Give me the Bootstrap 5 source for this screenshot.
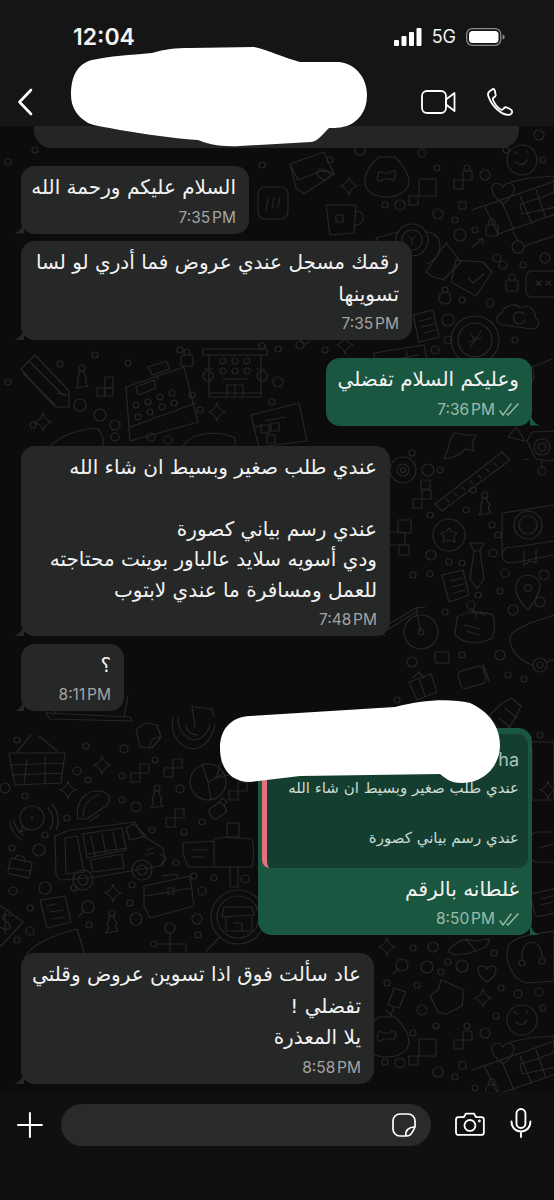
<!DOCTYPE html>
<html lang="en">
<head>
    <meta charset="UTF-8">
    <meta name="viewport" content="width=device-width, initial-scale=1.0">
    <title>Chat</title>
    <link href="https://cdn.jsdelivr.net/npm/bootstrap@5.3.0/dist/css/bootstrap.min.css" rel="stylesheet">
    <style>
        body {
            background-color: #0c0c0c;
            color: #f2f2f2;
            font-family: "DejaVu Sans", "Noto Sans", sans-serif;
            overflow: hidden;
        }

        .phone-shell { width: 554px; height: 1200px; position: relative; overflow: hidden; }

        /* top bar */
        .top-bar { height: 126px; background-color: #151515; position: relative; z-index: 2; }
        .status-row { height: 26px; padding: 24px 49px 0 73px; box-sizing: content-box; }
        .clock { font-family: Inter, sans-serif; font-weight: 600; font-size: 23px; line-height: 26px; }
        .net-label { font-family: Inter, sans-serif; font-size: 18px; line-height: 26px; margin: 0 10px; }
        .nav-row { height: 40px; margin-top: 32px; padding: 0 41px 0 17px; }
        .video-gap { margin-right: 31px; }

        /* chat area */
        .chat-area { height: 966px; position: relative; overflow: hidden; }
        .doodles { position: absolute; left: 0; top: 0; }
        .doodles * { fill: none; stroke: #272727; stroke-width: 1.2; stroke-linecap: round; stroke-linejoin: round; }
        .chat-flow { position: relative; }
        .notice-strip { height: 22px; margin: 0 35px 18px 34px; background-color: #242525; border-radius: 0 0 18px 18px; }

        .bubble {
            position: relative;
            padding: 6px 13px;
            border-radius: 14px;
            background-color: #262727;
            font-size: 20px;
            line-height: 31.5px;
        }
        .bubble::after {
            content: "";
            position: absolute;
            bottom: 0;
            left: -7px;
            width: 10px;
            height: 14px;
            background-color: inherit;
            clip-path: path('M10 0 C9 7 6 12 0 14 L10 14 Z');
        }
        .bubble-out { background-color: #1a5740; margin-left: auto; margin-right: 22px; }
        .bubble-out::after { left: auto; right: -8px; clip-path: path('M0 0 C1 7 4 12 10 14 L0 14 Z'); }
        .bubble-in { margin-left: 21px; }

        .msg-text { direction: rtl; text-align: right; white-space: nowrap; }
        .tight-lines { line-height: 30.8px; }
        .msg-time {
            font-family: Inter, sans-serif;
            font-size: 15.5px;
            word-spacing: -2.5px;
            line-height: 20px;
            margin-top: 4px;
            color: #a3a3a3;
        }
        .bubble-out .msg-time { color: #9cbcac; }

        .w-one { width: 228px; margin-bottom: 7.5px; }
        .w-two { width: 391px; margin-bottom: 18px; }
        .w-three { width: 206px; margin-bottom: 20.5px; }
        .w-four { width: 369px; margin-bottom: 8px; }
        .w-five { width: 103px; margin-bottom: 16.5px; }
        .w-six { width: 274px; margin-bottom: 18px; }
        .w-seven { width: 353px; }

        .reply-box {
            margin: 0 -9px 6px -9px;
            padding: 10px 9px 17px 0;
            background-color: #143f30;
            border-left: 5px solid #e8707c;
            border-radius: 8px 10px 10px 8px;
            color: #ccdad3;
            font-size: 15px;
            line-height: 25px;
        }
        .reply-name { font-family: Inter, sans-serif; font-size: 18px; line-height: 32px; color: #a9c2b6; text-align: right; }

        /* composer */
        .composer { height: 108px; background-color: #101010; padding: 12px 22px 0 17px; position: relative; z-index: 2; }
        .composer-field { width: 372px; height: 42px; margin: 0 24px 0 18px; padding-right: 15px; border-radius: 21px; background-color: #2a2a2a; }
        .composer-gap { margin-right: 25px; }

        .scribble { position: absolute; left: 0; top: 0; z-index: 3; pointer-events: none; }
    </style>
</head>
<body>
<div class="phone-shell">
    <div class="top-bar">
        <div class="status-row d-flex align-items-center justify-content-between">
            <span class="clock">12:04</span>
            <div class="d-flex align-items-center">
                <svg width="28" height="18" viewBox="0 0 28 18" fill="#fff">
                    <rect x="0" y="12" width="5" height="6" rx="1"/>
                    <rect x="7.500" y="8" width="5" height="10" rx="1"/>
                    <rect x="15" y="4" width="5" height="14" rx="1"/>
                    <rect x="22.500" y="0" width="5" height="18" rx="1"/>
                </svg>
                <span class="net-label">5G</span>
                <svg width="39" height="18" viewBox="0 0 39 18">
                    <rect x="0.700" y="0.700" width="34" height="16.600" rx="5.500" fill="none" stroke="#8a8a8a" stroke-width="1.300"/>
                    <rect x="3" y="3" width="29.500" height="12" rx="3.500" fill="#fff"/>
                    <path d="M36.500 6.500c1.500.4 2.200 1.300 2.200 2.500s-.7 2.100-2.200 2.500z" fill="#8a8a8a"/>
                </svg>
            </div>
        </div>
        <div class="nav-row d-flex align-items-center justify-content-between">
            <svg width="16" height="28" viewBox="0 0 16 28" fill="none" stroke="#fff" stroke-width="2.600" stroke-linecap="round" stroke-linejoin="round">
                <path d="M14 2 2.500 14 14 26"/>
            </svg>
            <div class="d-flex align-items-center">
                <svg class="video-gap" width="35" height="24" viewBox="0 0 35 24" fill="none" stroke="#fff" stroke-width="1.800" stroke-linejoin="round">
                    <rect x="1" y="1" width="24" height="22" rx="5"/>
                    <path d="M25 9.500 33.500 3v18L25 14.500z"/>
                </svg>
                <svg width="26" height="28" viewBox="0 0 26 28" fill="none" stroke="#fff" stroke-width="1.800" stroke-linejoin="round">
                    <path d="M5.500 1.200 2.300 3.500C.8 4.700.8 6.700 1.500 8.600 3.300 13.500 6.200 18 10.200 21.500c3.300 2.900 7.700 5.500 11.300 5.400 2.100-.1 3.800-1.500 3.600-3.400-.1-1-.8-1.700-1.700-2.200l-3.500-1.800c-1-.5-2-.3-2.800.5l-1.400 1.400c-.6.500-1.300.5-2 .1-3.500-2.300-6.300-5.800-7.800-9.700-.3-.8-.1-1.500.5-2l1.400-1.100c.9-.7 1.100-1.700.7-2.700L7.700 2.300c-.4-1-1.400-1.700-2.200-1.100z"/>
                </svg>
            </div>
        </div>
    </div>

    <div class="chat-area">
        <svg class="doodles" width="554" height="966" viewBox="0 126 554 966">
            <defs>
                <g id="spark"><path d="M0-9C1-4 3-2 8 0 3 2 1 4 0 9-1 4-3 2-8 0-3-2-1-4 0-9z"/></g>
                <g id="lock"><rect x="-6" y="-3" width="12" height="11" rx="2"/><path d="M-3-3v-3a3 3 0 0 1 6 0v3"/></g>
                <g id="blocks"><rect x="-9" y="0" width="9" height="9"/><rect x="0" y="-9" width="9" height="9"/></g>
                <g id="core"><circle cx="0" cy="-10" r="3"/><path d="M-3-7 2-7C1-3 4-2 5 0 3 2 3 5 6 8L-6 10C-3 6-3 3-5 1-4-1-2-3-3-7z"/></g>
            </defs>

            <!-- this part of the wallpaper comes back 860px further down -->
            <g id="tile-top">
                <g transform="translate(387 177)"><path d="M-8-20C-16-14-23-4-22 6-21 16-10 20 0 20 11 20 21 15 22 5 22-6 13-15 8-20z"/><path d="M-9-4a3 3 0 0 1 5 0H3a3 3 0 1 1 5 3 3 3 0 0 1-5 3H-4a3 3 0 1 1-5-3z"/></g>
                <g transform="translate(432 192)"><rect x="-13" y="-13" width="17" height="17"/><rect x="-23" y="4" width="9" height="9"/></g>
                <use href="#blocks" x="463" y="180"/>
                <rect x="459" y="202" width="7" height="7"/>
                <g transform="translate(503 190)"><path d="M0 14C-8 8-12 3-11-3-9-8-3-8 0-3 3-8 9-8 11-3 12 3 8 8 0 14z"/></g>
                <circle cx="522" cy="160" r="15"/><path d="M516 162c4 4 9 3 11-2M514 152l3 2M526 150l2 3"/>
                <g transform="translate(500 192)"><path d="M10-10 30-14 54-16V0L40 6 20 12 22 22 60 14"/><path d="M-28 18 58-12"/><path d="M-15 15-2 42 56 22M2 10l12 28M20 4l12 28M36-2l10 28"/><circle cx="18" cy="55" r="6"/><path d="M13 40 18 49M24 54 54 44"/></g>
                <use href="#lock" x="492" y="228"/>
            </g>
            <use href="#tile-top" y="860"/>

            <use href="#lock" x="512" y="283"/>
            <g transform="translate(412 240)"><circle r="16"/><circle r="10"/><path d="M-3-4 0 0 3-4M0 0V5"/><path d="M14-8C22-8 28-2 28 6 28 14 22 22 14 24M-14-8-36-2-32 4-16 4"/></g>
            <path d="M426 272 446 243 461 262 443 280 431 276zM472 247l10-8m-4 0h5v5"/>
            <g transform="translate(473 270)"><path d="M-17-10 10-8 19 2 3 26-22 12zM-5 8 0 13 11 4"/></g>
            <g transform="translate(520 317)"><path d="M-16 8C-24 8-26-2-18-4-16-13-4-14 0-9 8-13 16-8 15 0 22 4 18 12 12 12z"/><path d="M4-3A6 6 0 1 0 5 3"/></g>
            <g transform="translate(475 340)"><circle r="24"/><circle r="17"/><path d="M-5-7 0 0 6-9M0 0-5 8M-6 2 6-2"/></g>
            <g transform="translate(543 283)"><rect x="-17" y="-12" width="32" height="26" rx="6"/><path d="M-7 2l5-1M-7-2l5 4M-2-2l-5 4M3-2l5 4M8-2l-5 4"/></g>
            <g transform="translate(425 325)"><path d="M-12-10 8-15 14 12-6 17z"/><path d="M-5-4 7-7M-3 2 9-1M-1 8 10 5"/></g>

            <!-- next to the first bubble -->
            <g transform="translate(310 172)"><path d="M-20-8 14-20 24 2-6 22-14 16zM-20-8-12 8 14-2 24 2"/><path d="M8 4C4-2 14-6 14 0 20-4 24 4 14 8z"/></g>
            <g transform="translate(342 215)"><path d="M-16-10 14-10 12 18-12 20zM14-4C24-4 24 10 13 10"/><rect x="-6" y="0" width="7" height="7"/></g>
            <g transform="translate(272 205)"><rect x="-14" y="-18" width="30" height="32" rx="7"/><path d="M-4-6-6 6M2-8 0 4M8-8 6 2"/></g>
            <use href="#spark" x="349" y="186"/>

            <use href="#spark" x="345" y="345"/>
            <g transform="translate(520 375)"><circle r="14"/><path d="M-12-8-28-14M12-8 32-16"/></g>
            <g transform="translate(400 375)"><path d="M-26-22 24-30 32 10-22 24z"/><path d="M-14-14 18-20M6-25 12 16"/></g>

            <!-- middle right, below the green bubble -->
            <g transform="translate(458 447)"><path d="M-4-14 8-12 18-12 14-4 16 4 8 2 0 8-5 10-14 12-10 2-8-6z"/></g>
            <g transform="translate(472 478)"><path d="M-37 26-30 33 38-18 30-26z"/><path d="M-26 21l3 3M-18 15l3 3M-10 9l3 3M-2 3l3 3M6-3l3 3M14-9l3 3M22-15l3 3"/></g>
            <g transform="translate(542 447)"><circle r="8"/><circle r="4"/><path d="M-15-6-10-15 12-16 22-8V8L8 14-6 12zM-14 12l-5 1M0 14v6"/><circle cx="0" cy="24" r="4"/></g>
            <path d="M508 437l8-10 9 14z"/>
            <use href="#core" x="485" y="505"/>
            <g transform="translate(530 535)"><path d="M-28-22V20C-28 26-24 28-18 28L24 20M-28-22 24-30M-28 20C-26 12-22 12-16 12L24 6M-6 16V30L0 26 6 28V14"/><circle cx="-2" cy="-10" r="14"/><circle cx="-2" cy="-10" r="9"/></g>
            <g transform="translate(449 535)"><circle r="16"/><path d="M0-7 3-3 8-2 5 2 6 7 0 5-6 7-5 2-8-2-3-3z"/></g>
            <g transform="translate(477 565)"><path d="M-7-22H7L3-14H-3zM-3-14-7 14 0 24 7 14 3-14"/></g>
            <g transform="translate(455 585)"><path d="M-13-10 8-15 14 10-6 17z"/><path d="M-5-4 7-7M-3 2 9-1M-1 8 10 5"/></g>
            <g transform="translate(528 590)"><path d="M0 20C-8 12-13 4-12-4-11-11-6-15 0-15 8-14 13-8 12-2 10 6 5 14 0 20z"/><circle cx="0" cy="-2" r="3.500"/></g>
            <g transform="translate(421 632)"><circle r="17"/><circle r="3"/><path d="M0 0-5-24 4-25M-5-24-32-8-38-14M-5-20-34-2"/><path d="M-38-14-44-3-36 4"/></g>
            <g transform="translate(477 627)"><path d="M-20-10C-10-16 6-16 16-12 18-4 18 6 14 12-2 18-14 16-22 8z"/><path d="M-12-2 2 2M-10 4 2 8"/><circle cx="-6" cy="-22" r="4"/><path d="M-4-18 0-10M-8-17 8-12"/></g>
            <g transform="translate(540 665)"><circle r="7"/><circle r="3"/><path d="M-7 0C-20-4-30-14-30-26-30-34-20-36-10-42L14-50M7-3 14-6"/></g>
            <rect x="435" y="652" width="14" height="11" rx="2"/>
            <g transform="translate(473 677)"><rect x="-14" y="-9" width="26" height="18" rx="4" transform="rotate(-16)"/><path d="M10-13 16 4"/></g>
            <g transform="translate(423 688)"><path d="M-14-6 8-14 14 4-6 12zM-4-10 2 8M-10-10l6-6 5 6"/></g>
            <g transform="translate(503 712)"><path d="M-14 4-2-8 8-14 18-6 10 10 0 22zM-4 6 8 16M2-4 14 6"/></g>
            <g transform="translate(403 470)"><circle r="13"/><circle r="6"/><circle r="2.500"/></g>
            <g transform="translate(422 490)"><rect x="-1" y="-10" width="9" height="9"/><use href="#blocks" x="0" y="9"/></g>
            <g transform="translate(405 533)"><rect x="-7" y="-13" width="13" height="13"/><rect x="-17" y="-1" width="17" height="13"/><rect x="-6" y="12" width="10" height="10"/></g>
            <g transform="translate(540 760)"><path d="M-12-18H14V40H-12zM-12-18-8-12V40"/></g>
            <g transform="translate(545 850)"><rect x="-14" y="-18" width="34" height="30" rx="6"/><path d="M-6-2 8-6"/></g>
            <use href="#spark" x="548" y="790"/>
            <g transform="translate(545 905)"><rect x="-12" y="-14" width="30" height="24" rx="4" transform="rotate(-12)"/><path d="M-4 0 8-3M-4-6 8-9"/></g>

            <!-- lower right, under the reply bubble -->
            <use href="#spark" x="387" y="947"/>
            <use href="#spark" x="483" y="998"/>
            <g transform="translate(402 965)"><circle r="6"/><path d="M-4 4-9 9"/></g>
            <g transform="translate(487 972)"><path d="M0 10C-6 6-10 2-9-3-7-7-2-7 0-3 2-7 7-7 9-3 10 2 6 6 0 10z"/></g>
            <g transform="translate(448 998)"><path d="M-7-18 16-8 14 8-2 16-10 14-18 -2-10-8z"/></g>
            <g transform="translate(398 1000)"><path d="M-4-12 8-8 1 8-10 5zM-12 10l6 6M-4 8l-4 8"/></g>
            <g transform="translate(470 943)"><path d="M-22 8C-14-2-6-6 4-2L20-4 16 4 0 10-16 12zM-4-4 6 8"/></g>
            <g transform="translate(530 957)"><path d="M-20-14C-10-22 10-24 24-26V24L-4 26C-20 22-28-4-20-14z"/><path d="M-8 2C-10-20 12-20 12 0"/><circle cx="-8" cy="6" r="3"/><circle cx="12" cy="4" r="3"/></g>

            <!-- left column, next to the reply bubble -->
            <g transform="translate(37 767)"><path d="M-28-14H28L24 16-22 18zM-10-8-13 18M8-10 8 16M-27-2 27-4M-25 8 25 6M-20-15-6-32M20-16 2-31"/></g>
            <use href="#spark" x="102" y="765"/>
            <use href="#spark" x="68" y="790"/>
            <g transform="translate(95 803)"><path d="M-17 16C-20 2-12-12 2-12 14-12 17-4 12 2L-8 16z"/><path d="M-12 14C-12 2-6-6 4-8M-5 18 4 12"/></g>
            <g transform="translate(148 735)"><path d="M-12-6-2-12 9-10 13 2 4 13-8 12z"/><path d="M2 12C2 4 6 2 13 2"/></g>
            <g transform="translate(190 733)"><path d="M-17-15C-20-2-14 10-2 15 8 18 20 12 25-8M-12-16C-12-4-8 2 0 6 8 9 16 4 20-8M-4-8C-4-2 2 2 8 2"/><path d="M2-28 5-6M5-26 22-24 24-16"/></g>
            <g transform="translate(208 782)"><circle r="18"/><path d="M0 0 16-9M0 0-6-17M0 0 3 18"/><path d="M8-4 14-22 26-8z"/></g>
            <use href="#blocks" x="173" y="768"/>
            <use href="#blocks" x="140" y="773"/>
            <use href="#blocks" x="175" y="818"/>
            <use href="#blocks" x="238" y="791"/>
            <use href="#core" x="157" y="798"/>
            <g transform="translate(217 810)"><rect x="-8" y="-5" width="16" height="12" rx="3" transform="rotate(-35)"/><path d="M2-7 5-12 10-8 7-4"/></g>
            <g transform="translate(32 818)"><circle r="12"/><circle r="1"/><path d="M-9 8-12 14-4 11M16-10C22-4 22 6 18 12M-18 2C-18 8-12 16-8 18M20-14C26-8 28 4 24 12M-22 4C-22 12-14 20-10 22"/></g>
            <g transform="translate(110 850)"><path d="M-55-14-40-20 25-28 33-14 53-2 55 8 50 16-20 28-50 30-54 24z"/><path d="M-45-12-33-14-26 22-44 24z"/><path d="M-27-16 12-22 16 0-23 8zM-19-14-15 6M-8-16-4 4M3-18 7 2M-22 4 17-2"/><path d="M-20 10-17 22 14 18 12 4z"/><path d="M16-22 24-26 36-14 20-10z"/><path d="M50 4 56 8 52 16M36 0 44-2M36 5 44 3"/><circle cx="-27" cy="30" r="10"/><circle cx="-27" cy="30" r="5"/><circle cx="32" cy="20" r="10"/><circle cx="32" cy="20" r="5"/></g>
            <g transform="translate(20 868)"><rect x="-11" y="-8" width="22" height="16" rx="2" transform="rotate(12)"/><path d="M-5-9-3-13 4-11 5-6M-11 0 10 3"/></g>
            <g transform="translate(218 853)"><path d="M-35-10-4-12-4 14-30 14-35 0zM-4-14C4-16 10-16 34-14 36-4 36 6 34 14H-4M-26-3-10-3M-26 4-14 4"/><rect x="9" y="-30" width="12" height="14"/><path d="M12 14V34H20V14"/></g>
            <g transform="translate(168 898)"><path d="M-24-12 22-22 26 8-18 20-24 8zM-23-2 24-10M-6-22 8-24 10-20"/><rect x="0" y="-10" width="6" height="6"/></g>
            <g transform="translate(238 917)"><circle r="27"/><circle r="21"/><path d="M-18 20-32 34"/><path d="M-14-10H14L16-2-16 0zM-12 0V14H14V0M-4 6H4V14H-4"/></g>
            <g transform="translate(55 910)"><path d="M-15-10 10-14 16 12-8 18zM-8-4 0-6M-5 2 8 0M-3 9 10 7"/></g>
            <use href="#spark" x="113" y="893"/>
            <use href="#core" x="112" y="923"/>
            <g transform="translate(5 922)"><path d="M-10-20 18 0-4 24-24 10"/><path d="M6-6C0-10-4-6-2-3 1 0 6 1 5 5 3 9-2 8-5 5M0-11V12"/></g>
            <g transform="translate(150 940)"><circle cx="20" cy="-12" r="5"/><path d="M20-7V4H6M20 4V12M20 4H36V12"/><circle cx="4" cy="4" r="3"/></g>
            <g transform="translate(55 945)"><path d="M-30 12C-24 0-2-10 22-16L30 10"/></g>
            <circle cx="88" cy="907" r="6"/><path d="M84 911l-5 5"/>
            <g transform="translate(100 715)"><path d="M-54-2-50 4 32 6 30 2zM-45-2-40-20M24 2 28-20"/></g>

            <!-- strip between bubbles on the left -->
            <g transform="translate(43 377)"><path d="M-22-8-8-22 26 14 26 30 12 30z"/><path d="M-14-16 20 18M-20-4 12 28M14 16 24 18"/></g>
            <use href="#core" x="82" y="378"/>
            <g transform="translate(105 388)"><rect x="0" y="-11" width="8" height="11"/><rect x="-8" y="0" width="8" height="8"/><rect x="0" y="0" width="8" height="8"/></g>
            <g transform="translate(158 397)"><path d="M-32-10 26-30 40 25-28 44z"/><path d="M-28 30 38 6M-22-10-4-17-2-9-20-2z"/><circle cx="-22" cy="8" r="3"/><circle cx="-10" cy="5" r="3"/><circle cx="2" cy="0" r="3"/><circle cx="14" cy="-4" r="3"/><circle cx="-20" cy="20" r="3"/><circle cx="-8" cy="15" r="3"/><circle cx="4" cy="10" r="3"/><circle cx="16" cy="6" r="3"/><path d="M-10-30 8-36 12-28-6-22zM-2-22 0-18"/></g>
            <g transform="translate(235 367)"><path d="M-32-18H32V-12H-32zM-26-12V30H26V-12M-26 26H26M-8 30V18H8V30M0 18V30M-30 2H-22M22 2H30"/><circle cx="-27" cy="9" r="5"/><circle cx="27" cy="9" r="5"/><circle cx="-12" cy="-6" r="3"/><circle cx="0" cy="-6" r="3"/><circle cx="12" cy="-6" r="3"/><circle cx="-12" cy="4" r="3"/><circle cx="0" cy="4" r="3"/><circle cx="12" cy="4" r="3"/><path d="M-12 12H12"/></g>
            <use href="#lock" x="187" y="358"/>
            <use href="#spark" x="217" y="412"/>
            <use href="#spark" x="43" y="422"/>
            <g transform="translate(277 427)"><path d="M-26-12 22-24 30 14-18 20zM-22 0-14-2M-12-6 8-10"/><rect x="-16" y="-2" width="8" height="8"/><rect x="-6" y="-4" width="8" height="8"/><rect x="-10" y="8" width="8" height="8"/></g>
            <g transform="translate(80 435)"><path d="M-30 12C-20-2 10-8 18-6 24 0 24 8 22 14"/></g>
            <g transform="translate(225 438)"><path d="M-42 8C-34-6-6-8 10 0V10"/></g>

            <!-- small rings, scattered all over -->
            <g id="ring-layer"></g>
        </svg>

        <div class="chat-flow">
            <div class="notice-strip"></div>

            <div class="bubble bubble-in w-one">
                <div class="msg-text">السلام عليكم ورحمة الله</div>
                <div class="msg-time text-end">7:35 PM</div>
            </div>

            <div class="bubble bubble-in w-two">
                <div class="msg-text">رقمك مسجل عندي عروض فما أدري لو لسا<br>تسوينها</div>
                <div class="msg-time text-end">7:35 PM</div>
            </div>

            <div class="bubble bubble-out w-three">
                <div class="msg-text">وعليكم السلام تفضلي</div>
                <div class="msg-time d-flex justify-content-end align-items-center gap-1">
                    <span>7:36 PM</span>
                    <svg width="20" height="13" viewBox="0 0 20 13" fill="none" stroke="#9cbcac" stroke-width="1.400" stroke-linecap="round"><path d="M1 8l3 4L12 1M8 11l1 1L19 1"/></svg>
                </div>
            </div>

            <div class="bubble bubble-in w-four">
                <div class="msg-text tight-lines">عندي طلب صغير وبسيط ان شاء الله<br><br>عندي رسم بياني كصورة<br>ودي أسويه سلايد عالباور بوينت محتاجته<br>للعمل ومسافرة ما عندي لابتوب</div>
                <div class="msg-time text-end">7:48 PM</div>
            </div>

            <div class="bubble bubble-in w-five">
                <div class="msg-text">؟</div>
                <div class="msg-time text-end">8:11 PM</div>
            </div>

            <div class="bubble bubble-out w-six">
                <div class="reply-box">
                    <div class="reply-name">ha</div>
                    <div class="msg-text">عندي طلب صغير وبسيط ان شاء الله<br><br>عندي رسم بياني كصورة</div>
                </div>
                <div class="msg-text">غلطانه بالرقم</div>
                <div class="msg-time d-flex justify-content-end align-items-center gap-1">
                    <span>8:50 PM</span>
                    <svg width="20" height="13" viewBox="0 0 20 13" fill="none" stroke="#9cbcac" stroke-width="1.400" stroke-linecap="round"><path d="M1 8l3 4L12 1M8 11l1 1L19 1"/></svg>
                </div>
            </div>

            <div class="bubble bubble-in w-seven">
                <div class="msg-text">عاد سألت فوق اذا تسوين عروض وقلتي<br>تفضلي !<br>يلا المعذرة</div>
                <div class="msg-time text-end">8:58 PM</div>
            </div>
        </div>
    </div>

    <div class="composer d-flex align-items-start">
        <svg class="mt-2" width="26" height="26" viewBox="0 0 26 26" fill="none" stroke="#fff" stroke-width="2" stroke-linecap="round">
            <path d="M13 1V25M1 13H25"/>
        </svg>
        <div class="composer-field d-flex align-items-center justify-content-end">
            <svg width="24" height="24" viewBox="0 0 24 24" fill="none" stroke="#fff" stroke-width="1.700" stroke-linejoin="round">
                <path d="M14 23H8C4 23 1 20 1 16V8C1 4 4 1 8 1H16C20 1 23 4 23 8V14C19 23 17 23 14 23Z"/>
                <path d="M14 23C13 18 16 14 23 14"/>
            </svg>
        </div>
        <svg class="mt-2 composer-gap" width="30" height="24" viewBox="0 0 30 24" fill="none" stroke="#fff" stroke-width="1.800" stroke-linejoin="round">
            <path d="M3.500 5H9L11 1.500H19L21 5H26.500C28 5 29 6 29 7.500V20.500C29 22 28 23 26.500 23H3.500C2 23 1 22 1 20.500V7.500C1 6 2 5 3.500 5Z"/>
            <circle cx="15" cy="13.500" r="5.500"/>
            <circle cx="24.500" cy="9" r=".5" fill="#fff"/>
        </svg>
        <svg class="mt-1" width="22" height="30" viewBox="0 0 22 30" fill="none" stroke="#fff" stroke-width="1.900" stroke-linecap="round">
            <rect x="6.500" y="1" width="9" height="19" rx="4.500"/>
            <path d="M1.500 13.500C1.500 19.500 5.500 23.500 11 23.500S20.500 19.500 20.500 13.500M11 23.500V29"/>
        </svg>
    </div>

    <!-- the two hand-drawn white patches that hide the names -->
    <svg class="scribble" width="554" height="1200" viewBox="0 0 554 1200" fill="#fff">
        <path d="M71 95C71 75 78 64 92 60 110 56 130 55 152 53 165 49 175 48 190 48L254 47C268 50 285 58 300 62H339C356 64 367 78 367 95 367 110 360 118 353 123 345 128 335 128 329 128 322 135 318 141 311 142L240 146C220 147 208 144 198 140 170 138 145 134 120 130 105 127 95 126 88 123 78 117 71 108 71 95Z"/>
        <path d="M220 748C220 728 232 717 250 716L395 707C420 700 450 698 470 703 490 712 500 728 500 745 500 765 485 783 462 783 450 783 445 778 440 774L300 776 250 782C232 782 220 770 220 748Z"/>
    </svg>
</div>

<script src="https://cdn.jsdelivr.net/npm/bootstrap@5.3.0/dist/js/bootstrap.bundle.min.js"></script>
<script>
    // small background rings, x y r
    const rings = [
        [422,153,4],[437,168,3],[467,168,3],[485,175,5],[506,150,3],[539,135,5],[543,160,3],[385,205,3],[400,205,5],[438,214,5],[455,220,3],[460,235,6],[475,230,3],[497,258,4],[503,265,4],[545,258,5],[523,265,3],[445,290,3],[445,298,6],[462,300,3],[490,303,4],[448,320,6],[448,340,4],[435,350,4],[515,340,3],
        [360,150,5],[330,160,3],[300,345,4],[325,350,3],[60,364,3],[128,363,3],[192,395,3],[262,346,3],[278,349,3],[8,382,3],[33,425,3],[80,405,6],[100,415,6],[115,425,5],[200,410,3],[115,437,4],[151,437,4],[168,440,4],[272,402,3],[278,382,5],[305,340,4],
        [412,453,3],[428,470,6],[440,470,3],[473,490,3],[466,510,3],[430,515,3],[492,525,3],[498,535,3],[431,555,5],[493,553,4],[449,562,3],[462,563,3],[413,575,3],[430,574,3],[505,573,4],[478,595,3],[500,591,3],[445,612,3],[513,610,5],[544,575,5],[412,662,5],[462,655,3],[500,655,5],[508,675,3],[524,679,3],[397,700,3],[422,715,3],[540,602,5],
        [17,740,3],[86,746,3],[124,749,4],[155,760,3],[77,771,4],[88,780,3],[122,776,3],[180,789,4],[5,788,5],[25,796,3],[122,800,3],[67,818,3],[136,807,5],[202,822,3],[152,830,3],[184,832,3],[45,835,3],[12,848,3],[39,850,6],[176,863,3],[194,876,3],[214,878,3],[245,879,4],[132,885,3],[74,888,3],[45,888,6],[13,891,4],[30,908,3],[202,891,4],[130,903,3],[136,919,6],[89,925,3],[30,931,4],[197,919,5],[198,935,3],
        [8,162,3],[35,150,3],[262,165,3],[95,355,3],[180,350,3],[540,735,3],[17,940,3],
        [413,948,3],[433,947,5],[427,967,6],[448,962,3],[441,972,3],[462,966,6],[494,953,3],[387,983,3],[417,985,3],[501,988,3],[518,994,4],[539,992,4],[543,1008,3],[422,1010,5],[496,1016,3],[436,1026,3],[467,1026,3],[485,1033,5],[413,1033,3],[385,1062,3],[400,1063,5],[438,1072,5],[455,1077,3],[475,1088,3]
    ];
    const layer = document.getElementById('ring-layer');
    rings.forEach(function (ring) {
        const c = document.createElementNS('http://www.w3.org/2000/svg', 'circle');
        c.setAttribute('cx', ring[0]);
        c.setAttribute('cy', ring[1]);
        c.setAttribute('r', ring[2]);
        layer.appendChild(c);
    });
</script>
</body>
</html>
